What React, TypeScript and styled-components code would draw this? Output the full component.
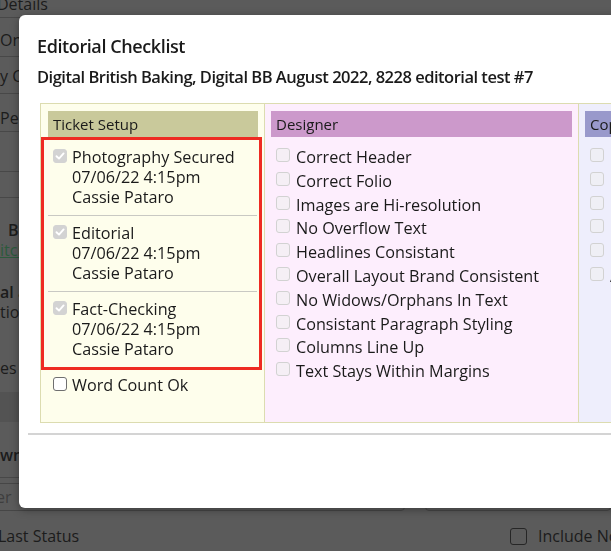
import React from "react";
import styled, { createGlobalStyle } from "styled-components";

const GlobalStyle = createGlobalStyle`
  html, body {
    margin: 0;
    padding: 0;
    height: 100%;
    overflow: hidden;
  }
  body {
    background: #5b5b5b;
    font-family: "Open Sans", "Liberation Sans", sans-serif;
    color: #1c1c1c;
  }
`;

interface BgLine {
  text: string;
  shift?: number;
  bold?: boolean;
  link?: boolean;
}

interface BgRowData {
  h: number;
  pt: number;
  line?: boolean;
  band?: boolean;
  lines: BgLine[];
}

const pageRows: BgRowData[] = [
  { h: 18, pt: 0, line: true, lines: [{ text: "Details", shift: -3 }] },
  { h: 39, pt: 12, line: true, lines: [{ text: "Online" }] },
  { h: 37, pt: 9, line: true, lines: [{ text: "y Copy" }] },
  { h: 38, pt: 14, line: true, lines: [{ text: "Person" }] },
  { h: 40, pt: 0, line: true, lines: [] },
  { h: 26, pt: 0, line: true, lines: [] },
  {
    h: 70,
    pt: 22,
    lines: [
      { text: "Bus", shift: 8, bold: true },
      { text: "itch", link: true },
    ],
  },
  {
    h: 55,
    pt: 14,
    lines: [{ text: "al and", bold: true }, { text: "tion" }],
  },
  { h: 69, pt: 35, lines: [{ text: "es no" }] },
  { h: 30, pt: 0, band: true, lines: [] },
  { h: 56, pt: 23, line: true, lines: [{ text: "wn", bold: true }] },
];

const ticketItems = [
  { label: "Photography Secured", date: "07/06/22 4:15pm", by: "Cassie Pataro" },
  { label: "Editorial", date: "07/06/22 4:15pm", by: "Cassie Pataro" },
  { label: "Fact-Checking", date: "07/06/22 4:15pm", by: "Cassie Pataro" },
];

const designerItems = [
  "Correct Header",
  "Correct Folio",
  "Images are Hi-resolution",
  "No Overflow Text",
  "Headlines Consistant",
  "Overall Layout Brand Consistent",
  "No Widows/Orphans In Text",
  "Consistant Paragraph Styling",
  "Columns Line Up",
  "Text Stays Within Margins",
];

const copyItems = [
  "Correct Spelling",
  "Correct Grammar",
  "Captions Checked",
  "Credits Correct",
  "Consistant Style",
  "All Names Checked",
];

type BoxKind = "done" | "locked" | "open";

const CheckBox = ({ kind }: { kind: BoxKind }) => (
  <Box $kind={kind}>
    {kind === "done" && (
      <svg width="12" height="12" viewBox="0 0 12 12">
        <path
          d="M2.5 6.2 L5 8.6 L9.6 3.4"
          fill="none"
          stroke="#ffffff"
          strokeWidth="1.9"
          strokeLinecap="round"
          strokeLinejoin="round"
        />
      </svg>
    )}
  </Box>
);

const App = () => {
  return (
    <>
      <GlobalStyle />
      <Page>
        {pageRows.map((row, i) => (
          <BgRow key={i} $h={row.h} $pt={row.pt} $line={row.line} $band={row.band}>
            {row.lines.map((l, j) => (
              <BgText key={j} $shift={l.shift || 0} $bold={l.bold} $link={l.link}>
                {l.text}
              </BgText>
            ))}
          </BgRow>
        ))}
        <InputRow>
          <BgInput $w={425}>
            <Placeholder>Search by number</Placeholder>
          </BgInput>
          <BgInput $w={190} />
        </InputRow>
        <StatusRow>
          <BgText $shift={-2}>Last Status</BgText>
          <IncludeBox>
            <BgCheck />
            <BgText $shift={0}>Include Notes</BgText>
          </IncludeBox>
        </StatusRow>
      </Page>

      <Modal>
        <Title>Editorial Checklist</Title>
        <Subtitle>
          Digital British Baking, Digital BB August 2022, 8228 editorial test #7
        </Subtitle>
        <Table>
          <Column $bg="#fefeec" $w={223}>
            <ColHeader $bg="#c9c99b">Ticket Setup</ColHeader>
            <Highlight>
              {ticketItems.map((item, i) => (
                <SignedItem key={i} $last={i === ticketItems.length - 1}>
                  <CheckBox kind="done" />
                  <SignedText>
                    <div>{item.label}</div>
                    <div>{item.date}</div>
                    <div>{item.by}</div>
                  </SignedText>
                </SignedItem>
              ))}
            </Highlight>
            <OpenItem>
              <CheckBox kind="open" />
              <span>Word Count Ok</span>
            </OpenItem>
          </Column>
          <Column $bg="#fdeefd" $w={314}>
            <ColHeader $bg="#cc99cb">Designer</ColHeader>
            <List>
              {designerItems.map((t) => (
                <ListRow key={t}>
                  <CheckBox kind="locked" />
                  <span>{t}</span>
                </ListRow>
              ))}
            </List>
          </Column>
          <Column $bg="#eeeefc" $w={220}>
            <ColHeader $bg="#9999cb">Copy Editor</ColHeader>
            <List>
              {copyItems.map((t) => (
                <ListRow key={t}>
                  <CheckBox kind="locked" />
                  <span>{t}</span>
                </ListRow>
              ))}
            </List>
          </Column>
        </Table>
        <Divider />
      </Modal>
    </>
  );
};

const Page = styled.div`
  display: flex;
  flex-direction: column;
  height: 551px;
  overflow: hidden;
  font-size: 16px;
`;

const BgRow = styled.div<{ $h: number; $pt: number; $line?: boolean; $band?: boolean }>`
  box-sizing: border-box;
  height: ${(p) => p.$h}px;
  padding-top: ${(p) => p.$pt}px;
  border-bottom: ${(p) => (p.$line ? "1px solid #484848" : "none")};
  background: ${(p) => (p.$band ? "#535353" : "transparent")};
  display: flex;
  flex-direction: column;
  flex-shrink: 0;
  &:first-child > * {
    margin-top: -6px;
  }
`;

const BgText = styled.div<{ $shift: number; $bold?: boolean; $link?: boolean }>`
  line-height: 20px;
  white-space: nowrap;
  margin-left: ${(p) => p.$shift}px;
  font-weight: ${(p) => (p.$bold ? 600 : 400)};
  color: ${(p) => (p.$link ? "#2c5a3c" : "#1c1c1c")};
  text-decoration: ${(p) => (p.$link ? "underline" : "none")};
`;

const InputRow = styled.div`
  display: flex;
  gap: 20px;
  height: 37px;
  box-sizing: border-box;
  padding-top: 5px;
  margin-left: -10px;
  flex-shrink: 0;
`;

const BgInput = styled.div<{ $w: number }>`
  width: ${(p) => p.$w}px;
  height: 28px;
  box-sizing: border-box;
  border: 1px solid #464646;
  border-radius: 4px;
  display: flex;
  align-items: center;
  padding-left: 6px;
`;

const Placeholder = styled.span`
  color: #3e3e3e;
  margin-left: -122px;
`;

const StatusRow = styled.div`
  display: flex;
  justify-content: space-between;
  align-items: center;
  height: 37px;
  padding-top: 6px;
  box-sizing: border-box;
`;

const IncludeBox = styled.div`
  display: flex;
  align-items: center;
  gap: 11px;
  width: 101px;
  overflow: hidden;
`;

const BgCheck = styled.span`
  width: 15px;
  height: 15px;
  flex-shrink: 0;
  border: 1px solid #262626;
  border-radius: 3px;
`;

/* modal */

const Modal = styled.div`
  position: fixed;
  left: 19px;
  top: 15px;
  width: 760px;
  height: 493px;
  box-sizing: border-box;
  background: #ffffff;
  border-radius: 6px;
  box-shadow: 0 2px 8px rgba(0, 0, 0, 0.35);
  padding: 18px 18px 0;
  color: #1a1a1a;
`;

const Title = styled.div`
  font-size: 18px;
  font-weight: 600;
  line-height: 26px;
  letter-spacing: -0.4px;
`;

const Subtitle = styled.div`
  margin-top: 6px;
  font-size: 16.5px;
  font-weight: 600;
  line-height: 24px;
  letter-spacing: -0.5px;
  white-space: nowrap;
`;

const Table = styled.div`
  display: flex;
  margin: 14px 0 0 3px;
  height: 320px;
  box-sizing: border-box;
  border: 1px solid #dcdcb0;
`;

const Column = styled.div<{ $bg: string; $w: number }>`
  flex-shrink: 0;
  width: ${(p) => p.$w}px;
  box-sizing: border-box;
  background: ${(p) => p.$bg};
  padding: 7px 6px 0 7px;
  & + & {
    border-left: 1px solid #dcdcb0;
    padding-left: 6px;
  }
`;

const ColHeader = styled.div<{ $bg: string }>`
  background: ${(p) => p.$bg};
  height: 26px;
  line-height: 27px;
  padding-left: 5px;
  font-size: 15px;
  white-space: nowrap;
  overflow: hidden;
`;

const Highlight = styled.div`
  margin: 0 -4px 0 -7px;
  padding: 0 2px 0 4px;
  border: 3px solid #ee2b22;
`;

const SignedItem = styled.div<{ $last: boolean }>`
  display: flex;
  gap: 5px;
  padding: 7px 0 8px 5px;
  border-bottom: ${(p) => (p.$last ? "none" : "1px solid #c9c9c3")};
`;

const SignedText = styled.div`
  font-size: 16.2px;
  line-height: 20px;
  white-space: nowrap;
`;

const OpenItem = styled.div`
  display: flex;
  gap: 5px;
  padding: 5px 0 0 5px;
  font-size: 16.2px;
  line-height: 20px;
`;

const List = styled.div`
  display: flex;
  flex-direction: column;
  padding-top: 8px;
`;

const ListRow = styled.div`
  display: flex;
  gap: 6px;
  height: 23.8px;
  padding-left: 5px;
  font-size: 16.2px;
  line-height: 24px;
  white-space: nowrap;
  & > span:first-child {
    margin-top: 3px;
  }
`;

const Box = styled.span<{ $kind: BoxKind }>`
  flex-shrink: 0;
  width: 14px;
  height: 14px;
  margin-top: 2px;
  box-sizing: border-box;
  border-radius: 3px;
  display: flex;
  align-items: center;
  justify-content: center;
  background: ${(p) =>
    p.$kind === "done" ? "#d3d3d3" : p.$kind === "locked" ? "rgba(240,240,240,0.6)" : "#ffffff"};
  border: 1px solid
    ${(p) => (p.$kind === "done" ? "#d3d3d3" : p.$kind === "locked" ? "#d2d2d2" : "#6f6f6f")};
`;

const Divider = styled.div`
  margin: 10px -30px 0 -9px;
  border-top: 2px solid #d4d4d4;
`;

export default App;
